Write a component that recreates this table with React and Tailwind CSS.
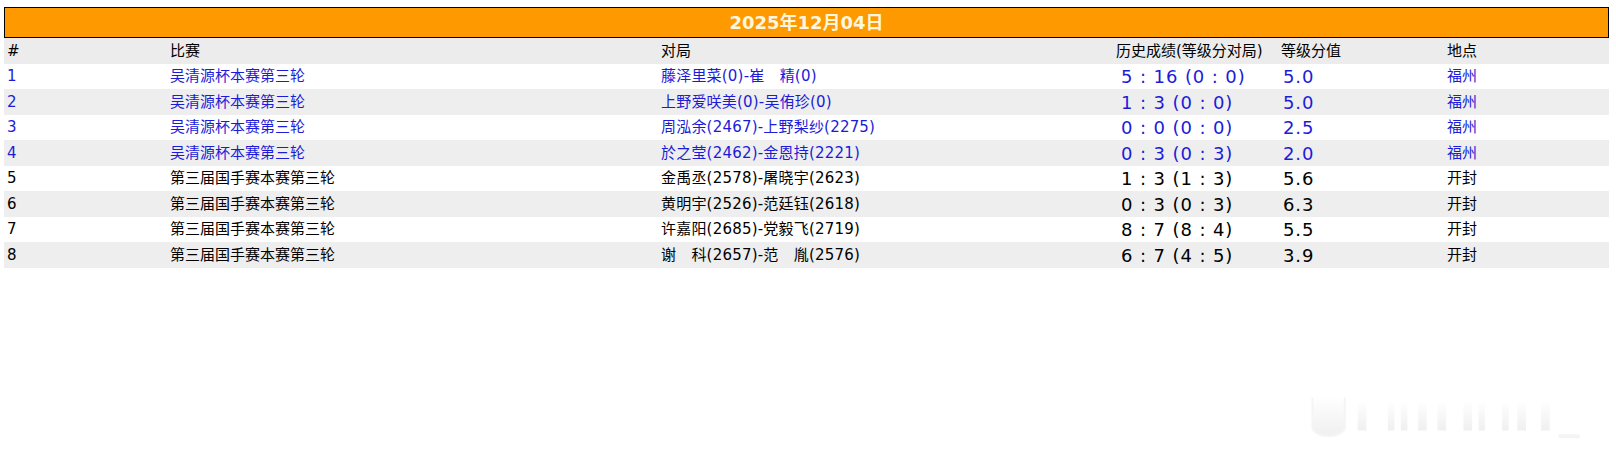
import React from "react";

const rows = [
  { n: 1, match: "吴清源杯本赛第三轮", game: "藤泽里菜(0)-崔　精(0)", score: "5 : 16 (0 : 0)", val: "5.0", place: "福州", blue: true },
  { n: 2, match: "吴清源杯本赛第三轮", game: "上野爱咲美(0)-吴侑珍(0)", score: "1 : 3 (0 : 0)", val: "5.0", place: "福州", blue: true },
  { n: 3, match: "吴清源杯本赛第三轮", game: "周泓余(2467)-上野梨纱(2275)", score: "0 : 0 (0 : 0)", val: "2.5", place: "福州", blue: true },
  { n: 4, match: "吴清源杯本赛第三轮", game: "於之莹(2462)-金恩持(2221)", score: "0 : 3 (0 : 3)", val: "2.0", place: "福州", blue: true },
  { n: 5, match: "第三届国手赛本赛第三轮", game: "金禹丞(2578)-屠晓宇(2623)", score: "1 : 3 (1 : 3)", val: "5.6", place: "开封", blue: false },
  { n: 6, match: "第三届国手赛本赛第三轮", game: "黄明宇(2526)-范廷钰(2618)", score: "0 : 3 (0 : 3)", val: "6.3", place: "开封", blue: false },
  { n: 7, match: "第三届国手赛本赛第三轮", game: "许嘉阳(2685)-党毅飞(2719)", score: "8 : 7 (8 : 4)", val: "5.5", place: "开封", blue: false },
  { n: 8, match: "第三届国手赛本赛第三轮", game: "谢　科(2657)-范　胤(2576)", score: "6 : 7 (4 : 5)", val: "3.9", place: "开封", blue: false },
];

const cols = "grid grid-cols-[163px_491px_455px_165px_166px_165px]";
const txt = "font-['DejaVu_Sans','Noto_Sans_CJK_SC',sans-serif] text-[15px]";

export default function App() {
  return (
    <div className="relative w-[1616px] h-[450px] bg-white font-['DejaVu_Sans','Noto_Sans_CJK_SC',sans-serif]">
      <div className="pt-[7px] pl-[4px] w-[1609px]">
        <div className="h-[31px] border border-black bg-[#ff9900] flex items-center justify-center">
          <span className="text-[18px] font-bold text-[#fff6df] leading-none">2025年12月04日</span>
        </div>
        <div className={`${cols} h-[26px] items-center bg-[#ececec] text-black leading-none ${txt}`}>
          <div className="pl-[3px]">#</div>
          <div className="pl-[3px]">比赛</div>
          <div className="pl-[3px]">对局</div>
          <div className="pl-[3px]">历史成绩(等级分对局)</div>
          <div className="pl-[3px]">等级分值</div>
          <div className="pl-[3px]">地点</div>
        </div>
        {rows.map((r, i) => (
          <div
            key={r.n}
            className={`${cols} ${i % 2 === 1 ? "h-[26px] bg-[#eeeeee]" : "h-[25px] bg-white"} items-center leading-none ${r.blue ? "text-[#1c1cd8]" : "text-black"}`}
          >
            <div className={`pl-[3px] ${txt}`}>{r.n}</div>
            <div className={`pl-[3px] ${txt}`}>{r.match}</div>
            <div className={`pl-[3px] ${txt} tracking-[0.2px]`}>{r.game}</div>
            <div className="pl-[8px] pt-[1px] text-[18px] tracking-[0.9px] font-['DejaVu_Sans',sans-serif] whitespace-pre">{r.score}</div>
            <div className="pl-[5px] pt-[1px] text-[18px] tracking-[0.9px] font-['DejaVu_Sans',sans-serif]">{r.val}</div>
            <div className={`pl-[3px] ${txt}`}>{r.place}</div>
          </div>
        ))}
      </div>
      <svg className="absolute left-[1306px] top-[394px] opacity-60" width="276" height="48" viewBox="0 0 256 50" preserveAspectRatio="none">
        <defs>
          <linearGradient id="wm" x1="0" y1="0" x2="0" y2="1">
            <stop offset="0" stopColor="#ffffff" />
            <stop offset="1" stopColor="#e6e6e6" />
          </linearGradient>
        </defs>
        <path d="M6 4 V34 a12 8 0 0 0 30 0 V4" fill="url(#wm)" stroke="#f0f0f0" strokeWidth="2" />
        <rect x="48" y="8" width="8" height="30" fill="url(#wm)" />
        <rect x="76" y="8" width="6" height="30" fill="url(#wm)" />
        <rect x="88" y="8" width="6" height="30" fill="url(#wm)" />
        <rect x="104" y="8" width="8" height="30" fill="url(#wm)" />
        <rect x="122" y="8" width="8" height="30" fill="url(#wm)" />
        <rect x="146" y="8" width="8" height="30" fill="url(#wm)" />
        <rect x="160" y="8" width="6" height="30" fill="url(#wm)" />
        <rect x="182" y="8" width="6" height="30" fill="url(#wm)" />
        <rect x="196" y="8" width="8" height="30" fill="url(#wm)" />
        <rect x="218" y="8" width="8" height="30" fill="url(#wm)" />
        <rect x="234" y="42" width="20" height="4" rx="2" fill="#eeeeee" />
      </svg>
    </div>
  );
}
